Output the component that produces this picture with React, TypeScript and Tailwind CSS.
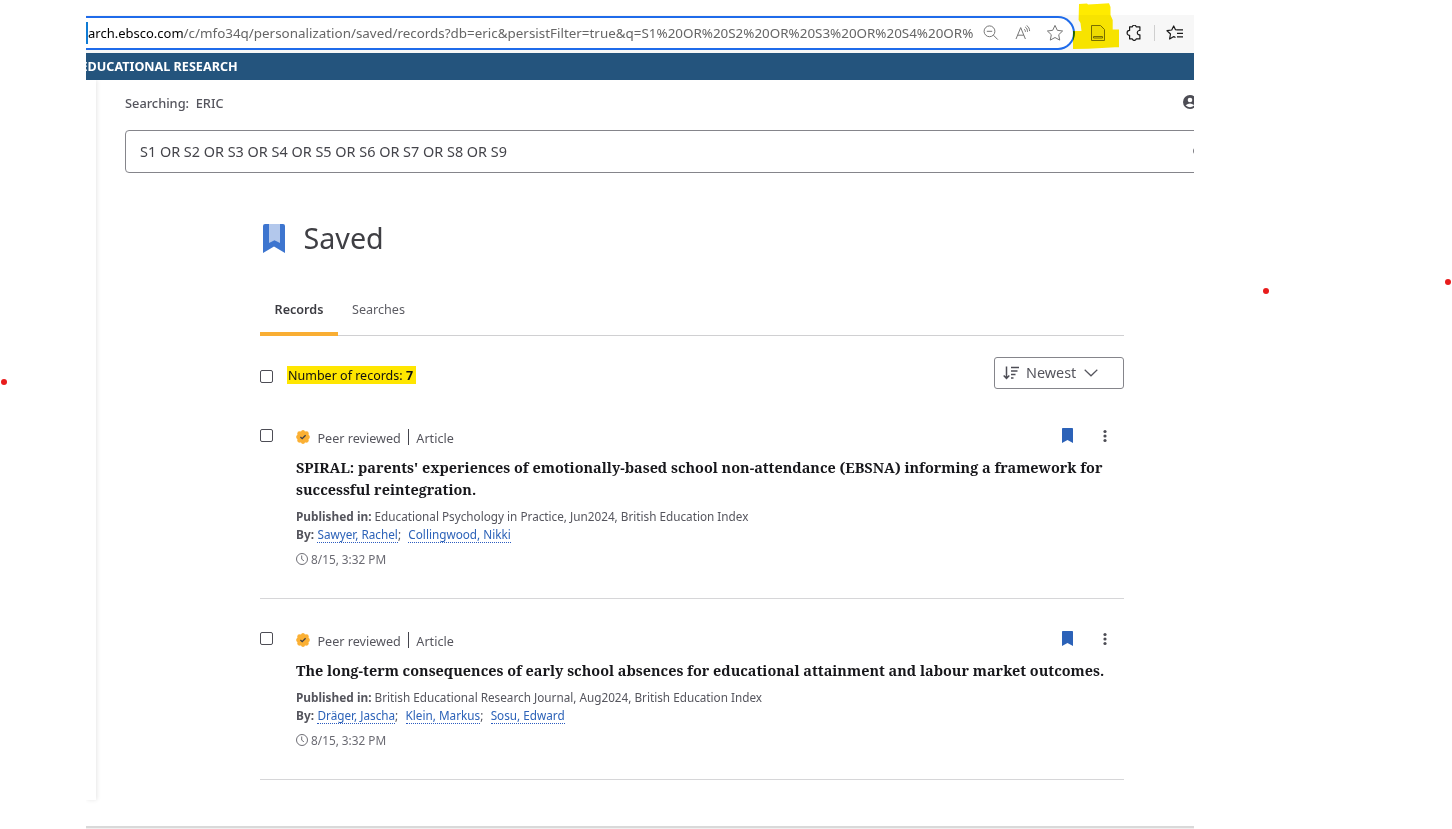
import React from 'react';
import { clsx } from 'clsx';

interface SavedRecord {
  title: string[];
  source: string;
  authors: string[];
  savedAt: string;
}

const records: SavedRecord[] = [
  {
    title: [
      "SPIRAL: parents' experiences of emotionally-based school non-attendance (EBSNA) informing a framework for",
      'successful reintegration.',
    ],
    source: 'Educational Psychology in Practice, Jun2024, British Education Index',
    authors: ['Sawyer, Rachel', 'Collingwood, Nikki'],
    savedAt: '8/15, 3:32 PM',
  },
  {
    title: ['The long-term consequences of early school absences for educational attainment and labour market outcomes.'],
    source: 'British Educational Research Journal, Aug2024, British Education Index',
    authors: ['Dräger, Jascha', 'Klein, Markus', 'Sosu, Edward'],
    savedAt: '8/15, 3:32 PM',
  },
];

function Checkbox({ className }: { className?: string }) {
  return <span className={clsx('block size-[13px] shrink-0 rounded-[2px] border border-[#4d4d55] bg-white', className)} />;
}

function VerifiedBadge() {
  return (
    <svg viewBox="0 0 14 14" className="size-[14px] shrink-0">
      <g fill="#fbb034">
        <circle cx="7" cy="7" r="6.1" />
        <circle cx="7" cy="2" r="1.9" />
        <circle cx="10.6" cy="3.4" r="2.1" />
        <circle cx="12" cy="7" r="1.9" />
        <circle cx="10.6" cy="10.6" r="2.1" />
        <circle cx="7" cy="12" r="1.9" />
        <circle cx="3.4" cy="10.6" r="2.1" />
        <circle cx="2" cy="7" r="1.9" />
        <circle cx="3.4" cy="3.4" r="2.1" />
      </g>
      <path d="M4.4 7 6.2 8.7 9.6 5.2" fill="none" stroke="#3f3f46" strokeWidth="1.3" />
    </svg>
  );
}

function BrowserBar() {
  return (
    <div className="relative flex h-[38px] items-start bg-[#f7f7f7]">
      <div className="mt-px flex h-[34px] w-[989px] shrink-0 items-center rounded-r-full border-y-2 border-r-2 border-[#1f6bea] bg-white">
        <span className="h-[22px] w-[2px] shrink-0 bg-[#0f7bd4]" />
        <span className="w-[892px] shrink-0 pb-px whitespace-nowrap text-[13.41px] leading-5 text-[#666]">
          <span className="text-[13px] text-black">arch.ebsco.com</span>
          /c/mfo34q/personalization/saved/records?db=eric&persistFilter=true&q=S1%20OR%20S2%20OR%20S3%20OR%20S4%20OR%
        </span>
        <svg viewBox="0 0 16 16" className="ml-[3px] size-4 shrink-0" fill="none" stroke="#767676">
          <circle cx="6.5" cy="6.3" r="5.4" />
          <path d="M3.8 6.3h5.4M10.4 10.2l4.4 4.4" />
        </svg>
        <svg viewBox="0 0 16 16" className="ml-4 size-4 shrink-0" fill="none" stroke="#767676">
          <path d="M1 14 5.7 2.6 10.4 14M2.6 10.2h6.2" />
          <path d="M9 4c1 .8 1.4 1.6 1.4 2.8M10.2 2c1.6 1 2.3 2.6 2.3 4.8M11.6.5c2 1.3 3 3.2 3 5.6" />
        </svg>
        <svg viewBox="0 0 18 18" className="ml-[15px] size-[18px] shrink-0" fill="none" stroke="#767676" strokeLinejoin="round">
          <path d="m9 1.4 2.3 4.9 5.3.7-3.9 3.7 1 5.4L9 13.5l-4.7 2.6 1-5.4L1.4 7l5.3-.7z" />
        </svg>
      </div>
      <svg viewBox="0 0 14 16" className="mt-[10px] ml-4 h-4 w-[14px] shrink-0" fill="none" stroke="#777">
        <path d="M.5.5h9l4 4v11H.5z" fill="#eee" />
        <path d="M2.5 11.5h9v1.5h-9z" />
      </svg>
      <svg viewBox="0 0 16 16" className="mt-[10px] ml-[21px] size-4 shrink-0" fill="none" stroke="#1a1a1a" strokeWidth="1.2" strokeLinejoin="round">
        <path d="M3.6 1.8h2.7a2 2 0 0 1 3.9 0h3.7v3.700h-.9a2.200 2.200 0 0 0 0 4.300h.9v4.100h-3.700a2 2 0 0 1-3.900 0H3.600v-3.500a2.200 2.200 0 0 1 0-5z" />
      </svg>
      <span className="mt-[10px] ml-[12px] h-4 w-px shrink-0 bg-[#cfcfcf]" />
      <svg viewBox="0 0 18 16" className="mt-[10px] ml-[11px] h-4 w-[18px] shrink-0" fill="none" stroke="#1a1a1a" strokeWidth="1.2" strokeLinejoin="round">
        <path d="M11 5 9.5 4.7 7.7 1 5.7 5 1 5.7l3.5 3.3-.9 5 4.2-2.4 1.7.9M11 4.900h6M11 8.400h6M11 11.900h6" />
      </svg>
      {/* Marker stroke over the extension icon */}
      <svg viewBox="0 0 46 47" className="absolute -top-3 left-[987px] h-[47px] w-[46px] mix-blend-multiply">
        <path d="M6 1 14 .5 15 1.5 24 1 36 .3 37.5 4v8l2.2 5v9.5H46v17.800H42L29 45l-14 .8-15 .2V28h8.500L7.500 20 5.600 17z" fill="#ffeb00" />
      </svg>
    </div>
  );
}

function RecordItem({ record }: { record: SavedRecord }) {
  return (
    <article className="border-b border-[#d6d6d8] pb-[30px] text-[#55555d]">
      <div className="flex items-start pt-[33px]">
        <Checkbox />
        <div className="-mt-[2px] ml-[23px] flex h-5 items-center text-[12.6px]">
          <VerifiedBadge />
          <span className="mt-[5px] ml-[7.5px]">Peer reviewed</span>
          <span className="mr-[7px] ml-[7.5px] h-4 w-px bg-[#44444c]" />
          <span className="mt-[4px]">Article</span>
        </div>
        <svg viewBox="0 0 11 15" className="-mt-px ml-auto h-[15px] w-[11px]" fill="#2c62b8">
          <path d="M0 .8Q0 0 .8 0h9.4q.8 0 .8.8V15l-5.5-3L0 15z" />
        </svg>
        <svg viewBox="0 0 4 14" className="mr-[17px] ml-[30px] h-[14px] w-1" fill="#4d4d55">
          <circle cx="2" cy="2.5" r="1.6" />
          <circle cx="2" cy="7" r="1.6" />
          <circle cx="2" cy="11.5" r="1.6" />
        </svg>
      </div>
      <div className="pl-9">
        <h2 className="mt-[10px] font-['Noto_Serif','DejaVu_Serif',serif] text-[14.42px] leading-[22px] font-bold text-[#17171b]">
          {record.title.map((line) => (
            <span key={line} className="block whitespace-nowrap">{line}</span>
          ))}
        </h2>
        <div className="mt-[6px] text-[11.74px] leading-[18px]">
          <p><b className="text-[11.85px]">Published in:</b> {record.source}</p>
          <p className="flex">
            <b className="mr-[3.5px] text-[11.85px]">By:</b>
            {record.authors.map((author, i) => (
              <span key={author} className="mr-[7.3px]">
                <a className="border-b border-dotted border-[#2c5cc0] text-[#2c62b8]">{author}</a>
                {i < record.authors.length - 1 && ';'}
              </span>
            ))}
          </p>
        </div>
        <p className="mt-[7px] flex items-center text-[11.8px] leading-[18px] text-[#6b6b73]">
          <svg viewBox="0 0 12 12" className="mr-[3px] size-3" fill="none" stroke="#5f5f67" strokeWidth=".9">
            <circle cx="6" cy="6" r="5.5" />
            <path d="M5.7 2.5v3.7l2.2 1.6" />
          </svg>
          {record.savedAt}
        </p>
      </div>
    </article>
  );
}

export default function App() {
  return (
    <div className="relative h-[829px] w-[1452px] overflow-hidden bg-white pt-[15px] pl-[86px] font-['Noto_Sans',sans-serif]">
      <div className="w-[1108px]">
        <BrowserBar />
        <div className="flex h-[27px] items-center overflow-hidden bg-[#24547d]">
          <span className="-ml-[5.5px] text-[12.6px] leading-[18px] font-bold whitespace-nowrap text-white">EDUCATIONAL RESEARCH</span>
        </div>
        <div className="flex h-[746px] overflow-hidden">
          <aside className="h-[720px] w-[10px] shrink-0 shadow-[1px_0_4px_rgba(0,0,0,0.1)]" />
          <main className="w-[1098px] shrink-0 overflow-hidden pl-[29px]">
            <div className="flex h-[50px] w-[1072px] items-start">
              <p className="mt-[14px] text-[12.8px] leading-[18px] font-medium text-[#55555d]">Searching:&nbsp; ERIC</p>
              <svg viewBox="0 0 14 14" className="mt-[15px] ml-auto size-[14px]">
                <circle cx="7" cy="7" r="7" fill="#4d4d55" />
                <circle cx="7" cy="5" r="2.3" fill="#fff" />
                <path d="M2.6 10.3q4.4-3.8 8.8 0Q7 14 2.6 10.3z" fill="#fff" />
              </svg>
            </div>
            <div className="flex h-[43px] w-[1090px] items-center rounded-[4px] border border-[#85858b] pl-[14px] text-[14.42px] text-[#44444a]">
              S1 OR S2 OR S3 OR S4 OR S5 OR S6 OR S7 OR S8 OR S9
              <svg viewBox="0 0 14 14" className="mr-[7px] ml-auto size-[14px]" fill="none" stroke="#4d4d55" strokeWidth="1.5">
                <circle cx="6" cy="6" r="5" />
              </svg>
            </div>

            <div className="ml-[135px] w-[864px]">
              <div className="flex h-[126px] items-start pt-[47px]">
                <svg viewBox="0 0 24 30" className="mt-[3px] ml-[2px] h-[30px] w-6">
                  <path d="M1 3q0-2 2-2h18q2 0 2 2v27l-11-6.5L1 30z" fill="#3d75cf" />
                  <path d="M7 1h11v19l-5.5-2.8L7 20z" fill="#b3c8ec" />
                </svg>
                <h1 className="-mt-px ml-[17.5px] text-[28.7px] leading-[38px] text-[#3f3f44]">Saved</h1>
              </div>
              <nav className="flex h-[37px] items-stretch border-b border-[#d0d0d2] text-[12.6px]">
                <span className="-mb-px flex w-[78px] justify-center border-b-4 border-[#f9ae33] pt-[2px] font-semibold text-[#3c3c42]">Records</span>
                <span className="ml-[14px] pt-[2px] text-[#5c5c63]">Searches</span>
              </nav>
              <div className="flex h-[60px] items-start pt-[21px]">
                <Checkbox className="mt-[13px]" />
                <span className="mt-[9px] ml-[14px] h-[18px] w-[129px] bg-[#ffe600] pl-px text-[12.5px] leading-[20px] whitespace-nowrap text-[#111]">
                  Number of records: <b>7</b>
                </span>
                <button className="ml-auto flex h-8 w-[130px] items-center rounded-[3px] border border-[#85858b] pl-2 text-[14.4px] text-[#55555d]">
                  <svg viewBox="0 0 16 14" className="h-[14px] w-4" fill="none" stroke="#4d4d55" strokeWidth="1.5">
                    <path d="M3.5.5v12M.7 9.5l2.8 3 2.8-3M8 1.5h8M8 5h6.5M8 8.5h4.5M8 12h2.5" />
                  </svg>
                  <span className="ml-[7px]">Newest</span>
                  <svg viewBox="0 0 14 8" className="ml-[8px] h-2 w-[14px]" fill="none" stroke="#55555d" strokeWidth="1.2">
                    <path d="m.7.8 6.3 6L13.3.8" />
                  </svg>
                </button>
              </div>
              {records.map((record) => (
                <RecordItem key={record.source} record={record} />
              ))}
            </div>
          </main>
        </div>
        <div className="h-[3px] border-t-2 border-[#d9d9d9] bg-[#f0f0f0]" />
      </div>

      {/* Loose pen marks around the capture */}
      <span className="absolute top-[379px] left-[1px] size-[6px] rounded-full bg-[#e81c1c]" />
      <span className="absolute top-[288px] left-[1263px] size-[6px] rounded-full bg-[#e81c1c]" />
      <span className="absolute top-[279px] left-[1445px] size-[6px] rounded-full bg-[#e81c1c]" />
    </div>
  );
}
